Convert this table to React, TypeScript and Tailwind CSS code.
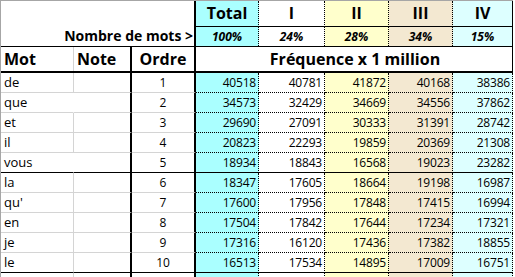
import React from 'react'

type Row = {
  mot: string
  ordre: number
  values: number[]
  openRight?: boolean
  thick?: boolean
}

const rows: Row[] = [
  { mot: 'de', ordre: 1, values: [40518, 40781, 41872, 40168, 38386] },
  { mot: 'que', ordre: 2, values: [34573, 32429, 34669, 34556, 37862], openRight: true },
  { mot: 'et', ordre: 3, values: [29690, 27091, 30333, 31391, 28742] },
  { mot: 'il', ordre: 4, values: [20823, 22293, 19859, 20369, 21308] },
  { mot: 'vous', ordre: 5, values: [18934, 18843, 16568, 19023, 23282], openRight: true, thick: true },
  { mot: 'la', ordre: 6, values: [18347, 17605, 18664, 19198, 16987] },
  { mot: "qu'", ordre: 7, values: [17600, 17956, 17848, 17415, 16994] },
  { mot: 'en', ordre: 8, values: [17504, 17842, 17644, 17234, 17321] },
  { mot: 'je', ordre: 9, values: [17316, 16120, 17436, 17382, 18855] },
  { mot: 'le', ordre: 10, values: [16513, 17534, 14895, 17009, 16751], thick: true },
]

const cols = [
  { w: 'w-[63px]', bg: 'bg-[#aaffff]', title: 'Total', pct: '100%' },
  { w: 'w-[66px]', bg: 'bg-white', title: 'I', pct: '24%' },
  { w: 'w-[64px]', bg: 'bg-[#ffffcc]', title: 'II', pct: '28%' },
  { w: 'w-[64px]', bg: 'bg-[#f3e8d1]', title: 'III', pct: '34%' },
  { w: 'w-[60px]', bg: 'bg-[#ddffff]', title: 'IV', pct: '15%' },
]

function App() {
  return (
    <div className="h-[277px] w-[515px] overflow-hidden bg-white font-['Open_Sans',sans-serif] text-black">
      <div className="w-[513px] border-l border-t border-l-[#a6a6a6] border-t-[#a6a6a6]">
        {/* titles */}
        <div className="flex h-[26px]">
          <div className="w-[195px] border-r-2 border-r-black" />
          {cols.map((c, i) => (
            <div
              key={c.title}
              className={`${c.w} ${c.bg} border-b border-r border-b-black text-center text-[16px] font-bold leading-[25px] ${
                i === cols.length - 1 ? 'border-r-black' : 'border-r-black [border-right-style:dotted]'
              }`}
            >
              {c.title}
            </div>
          ))}
        </div>

        {/* share of words */}
        <div className="flex h-[20px] border-b border-b-black">
          <div className="w-[195px] border-r-2 border-r-black pr-[1px] text-right text-[14px] font-bold leading-[18px]">
            Nombre de mots &gt;
          </div>
          {cols.map((c, i) => (
            <div
              key={c.pct}
              className={`${c.w} ${c.bg} border-r text-center text-[12px] font-bold italic leading-[19px] ${
                i === cols.length - 1 ? 'border-r-black' : 'border-r-black [border-right-style:dotted]'
              }`}
            >
              {c.pct}
            </div>
          ))}
        </div>

        {/* column headers */}
        <div className="flex h-[26px] border-b-2 border-b-black text-[16px] font-bold leading-[24px]">
          <div className="w-[73px] border-r border-r-[#d4d4d4] pl-[3px]">Mot</div>
          <div className="w-[58px] border-r-2 border-r-black pl-[3px]">Note</div>
          <div className="w-[64px] border-r-2 border-r-black text-center">Ordre</div>
          <div className="w-[317px] border-r border-r-black pl-[2px] text-center">Fréquence x 1 million</div>
        </div>

        {/* data */}
        {rows.map((r) => {
          const grayB = r.thick ? 'border-b-black' : 'border-b-[#d4d4d4]'
          const dotB = r.thick ? 'border-b-black' : 'border-b-black [border-bottom-style:dotted]'
          return (
            <div key={r.mot} className="flex h-[20px] text-[12px] leading-[19px]">
              <div
                className={`w-[73px] border-b border-r pl-[3px] text-[13px] ${grayB} ${
                  r.openRight ? 'border-r-white' : 'border-r-[#d4d4d4]'
                }`}
              >
                {r.mot}
              </div>
              <div className={`w-[58px] border-b border-r-2 border-r-black ${grayB}`} />
              <div className={`w-[64px] border-b border-r-2 border-r-black text-center ${grayB}`}>{r.ordre}</div>
              {cols.map((c, i) => (
                <div
                  key={c.title}
                  className={`${c.w} ${c.bg} border-b border-r border-r-black pr-[2px] text-right tracking-[-0.2px] [border-right-style:dotted] ${dotB}`}
                >
                  {r.values[i]}
                </div>
              ))}
            </div>
          )
        })}

        {/* next row, cut off */}
        <div className="flex h-[5px]">
          <div className="w-[73px] border-r border-r-[#d4d4d4]" />
          <div className="w-[58px] border-r-2 border-r-black" />
          <div className="w-[64px] border-r-2 border-r-black" />
          {cols.map((c) => (
            <div key={c.title} className={`${c.w} ${c.bg} border-r border-r-black [border-right-style:dotted]`} />
          ))}
        </div>
      </div>
    </div>
  )
}

export default App
